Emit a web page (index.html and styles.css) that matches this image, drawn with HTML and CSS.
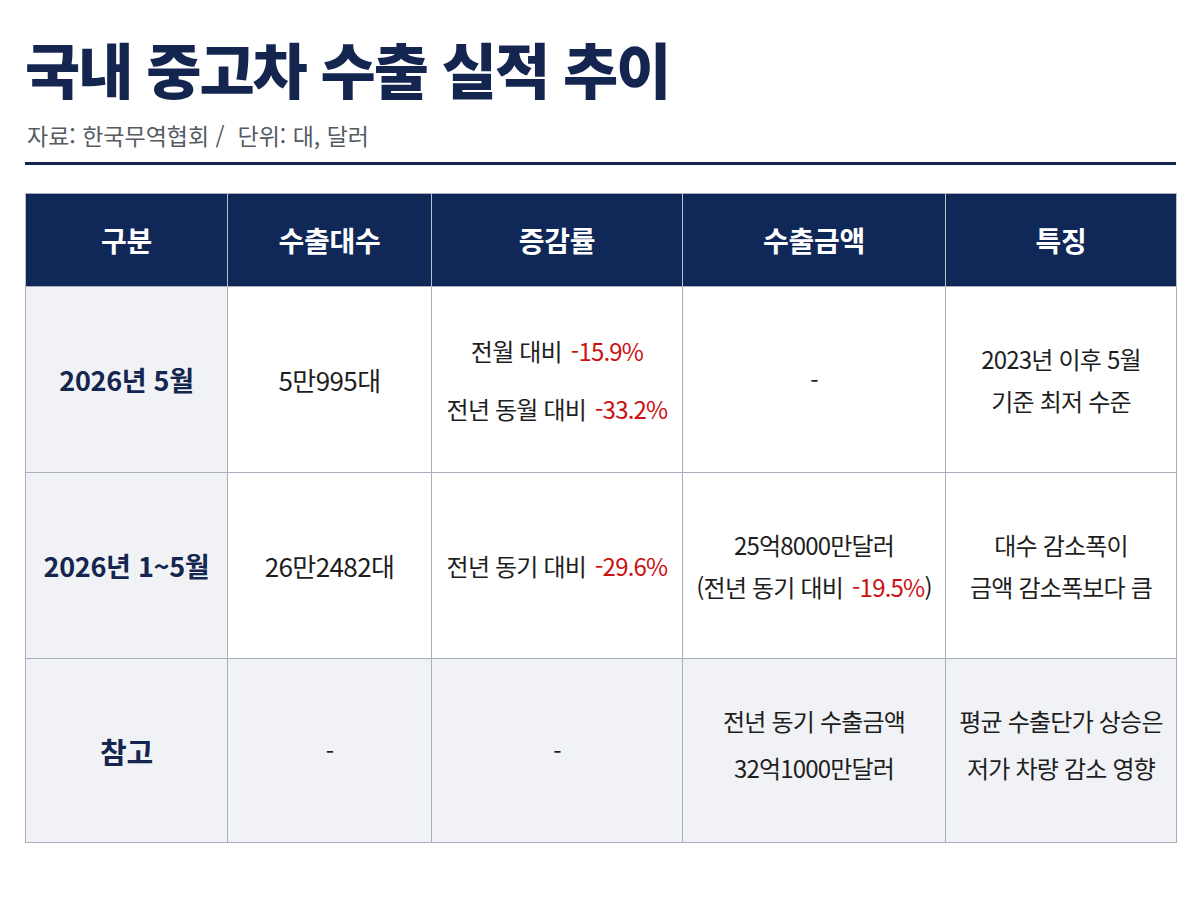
FILE: index.html
```html
<!DOCTYPE html>
<html lang="ko">
<head>
<meta charset="utf-8">
<title>국내 중고차 수출 실적 추이</title>
<link rel="stylesheet" href="styles.css">
</head>
<body>
<div class="page">
  <header class="head">
    <h1 class="title">국내 중고차 수출 실적 추이</h1>
    <p class="source">자료: 한국무역협회 /&nbsp; 단위: 대, 달러</p>
  </header>
  <div class="rule"></div>
  <table class="data">
    <colgroup>
      <col class="c1"><col class="c2"><col class="c3"><col class="c4"><col class="c5">
    </colgroup>
    <thead>
      <tr><th>구분</th><th>수출대수</th><th>증감률</th><th>수출금액</th><th>특징</th></tr>
    </thead>
    <tbody>
      <tr class="r1">
        <td class="label">2026년 5월</td>
        <td class="num">5만995대</td>
        <td class="rates"><div class="line">전월 대비 <span class="neg">-15.9%</span></div><div class="line">전년 동월 대비 <span class="neg">-33.2%</span></div></td>
        <td>-</td>
        <td><div>2023년 이후 5월</div><div>기준 최저 수준</div></td>
      </tr>
      <tr class="r2">
        <td class="label">2026년 1~5월</td>
        <td class="num">26만2482대</td>
        <td>전년 동기 대비 <span class="neg">-29.6%</span></td>
        <td><div>25억8000만달러</div><div>(전년 동기 대비 <span class="neg">-19.5%</span>)</div></td>
        <td><div>대수 감소폭이</div><div>금액 감소폭보다 큼</div></td>
      </tr>
      <tr class="r3">
        <td class="label short">참고</td>
        <td>-</td>
        <td>-</td>
        <td class="tall"><div>전년 동기 수출금액</div><div>32억1000만달러</div></td>
        <td class="tall"><div>평균 수출단가 상승은</div><div>저가 차량 감소 영향</div></td>
      </tr>
    </tbody>
  </table>
</div>
</body>
</html>
```

FILE: styles.css
```css
html, body {
  margin: 0;
  padding: 0;
  background: #ffffff;
}
body {
  font-family: "Noto Sans CJK KR", "Noto Sans", sans-serif;
  color: #1e1e1e;
}
.page {
  padding: 33px 24px 0 25px;
}
.title {
  margin: 0;
  font-size: 60px;
  line-height: 70px;
  font-weight: 900;
  letter-spacing: -2px;
  color: #14254f;
}
.source {
  margin: 17px 0 0 2px;
  font-size: 23px;
  line-height: 30px;
  color: #555b63;
  letter-spacing: 0;
}
.rule {
  margin-top: 12px;
  height: 3px;
  background: #14254f;
  width: 1151px;
}
.data {
  margin-top: 28px;
  width: 1151px;
  table-layout: fixed;
  border-collapse: collapse;
  border: 1.5px solid #a7afbd;
}
.c1 { width: 202px; }
.c2 { width: 204px; }
.c3 { width: 251px; }
.c4 { width: 263px; }
.c5 { width: 231px; }
.data th {
  height: 92px;
  padding: 0;
  background: #0f2857;
  color: #ffffff;
  font-size: 28px;
  font-weight: 700;
  letter-spacing: -0.3px;
  border-left: 1px solid #b8c0cf;
  border-right: 1px solid #b8c0cf;
}
.data td {
  padding: 0;
  text-align: center;
  vertical-align: middle;
  font-size: 24px;
  line-height: 42px;
  letter-spacing: -0.8px;
  border: 1.5px solid #a7afbd;
}
.data td.num {
  font-size: 26px;
  letter-spacing: -0.6px;
}
.r1 td, .r2 td { height: 185px; background: #ffffff; }
.r3 td { height: 183px; background: #f1f2f5; }
.data td.label {
  background: #f1f2f5;
  color: #14254f;
  font-weight: 700;
  font-size: 27px;
  letter-spacing: -0.3px;
}
.data td.label.short { font-size: 29px; }
.rates .line { line-height: 58px; }
.data td.tall { line-height: 47px; padding-bottom: 14px; height: 169px; }
.neg { color: #cc1010; margin-left: 3px; }
```
